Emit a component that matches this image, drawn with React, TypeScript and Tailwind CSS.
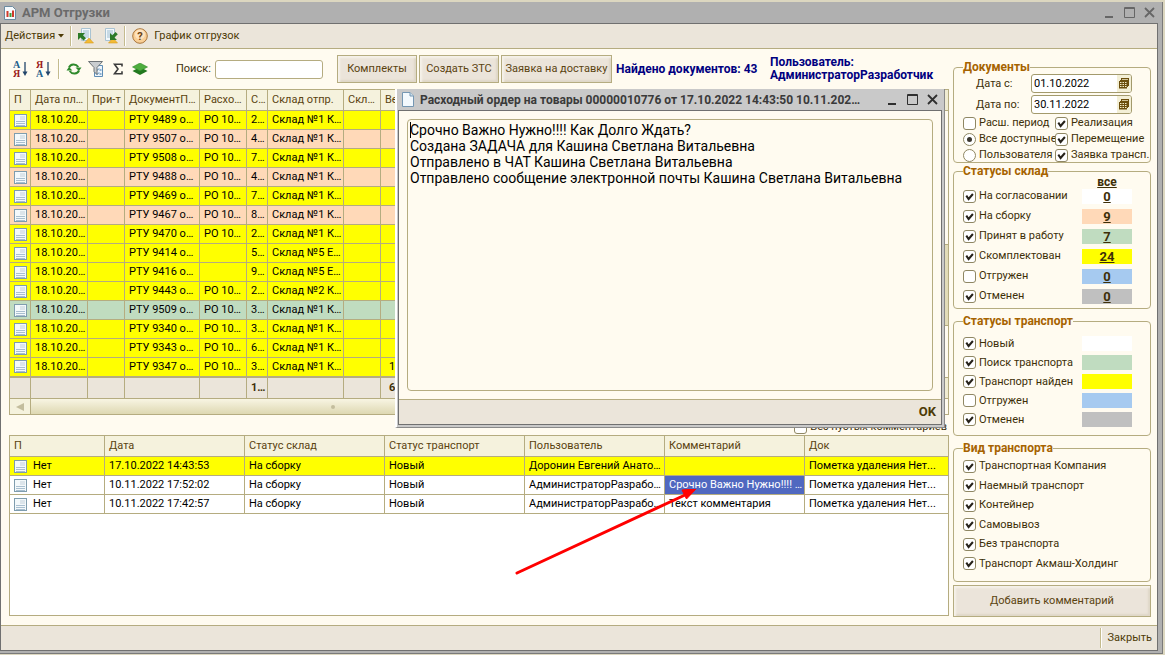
import type { ReactNode } from "react";
import { clsx } from "clsx";

const shipments = [
	{ doc: "РТУ 9489 о…", order: "РО 10…", count: "2…", store: "Склад №1 К…", color: "bg-[#ffff00]" },
	{ doc: "РТУ 9507 о…", order: "РО 10…", count: "4…", store: "Склад №1 К…", color: "bg-[#ffd9b8]" },
	{ doc: "РТУ 9508 о…", order: "РО 10…", count: "7…", store: "Склад №1 К…", color: "bg-[#ffff00]" },
	{ doc: "РТУ 9488 о…", order: "РО 10…", count: "4…", store: "Склад №1 К…", color: "bg-[#ffd9b8]" },
	{ doc: "РТУ 9469 о…", order: "РО 10…", count: "7…", store: "Склад №1 К…", color: "bg-[#ffff00]" },
	{ doc: "РТУ 9467 о…", order: "РО 10…", count: "8…", store: "Склад №1 К…", color: "bg-[#ffd9b8]" },
	{ doc: "РТУ 9470 о…", order: "РО 10…", count: "2…", store: "Склад №1 К…", color: "bg-[#ffff00]" },
	{ doc: "РТУ 9414 о…", order: "", count: "5…", store: "Склад №5 Е…", color: "bg-[#ffff00]" },
	{ doc: "РТУ 9416 о…", order: "", count: "9…", store: "Склад №5 Е…", color: "bg-[#ffff00]" },
	{ doc: "РТУ 9443 о…", order: "РО 10…", count: "2…", store: "Склад №2 К…", color: "bg-[#ffff00]" },
	{ doc: "РТУ 9509 о…", order: "РО 10…", count: "3…", store: "Склад №1 К…", color: "bg-[#c0dcc0]" },
	{ doc: "РТУ 9340 о…", order: "РО 10…", count: "3…", store: "Склад №1 К…", color: "bg-[#ffff00]" },
	{ doc: "РТУ 9343 о…", order: "РО 10…", count: "6…", store: "Склад №1 К…", color: "bg-[#ffff00]" },
	{ doc: "РТУ 9347 о…", order: "РО 10…", count: "3…", store: "Склад №1 К…", weight: "1", color: "bg-[#ffff00]" },
];

const comments = [
	{ date: "17.10.2022 14:43:53", user: "Доронин Евгений Анато…", text: "", color: "bg-[#ffff00]" },
	{ date: "10.11.2022 17:52:02", user: "АдминистраторРазрабо…", text: "Срочно Важно Нужно!!!! …", color: "bg-white", active: true },
	{ date: "10.11.2022 17:42:57", user: "АдминистраторРазрабо…", text: "Текст комментария", color: "bg-white" },
];

const storeStatuses = [
	{ label: "На согласовании", count: 0, color: "bg-white", checked: true },
	{ label: "На сборку", count: 9, color: "bg-[#ffd9b8]", checked: true },
	{ label: "Принят в работу", count: 7, color: "bg-[#c0dcc0]", checked: true },
	{ label: "Скомплектован", count: 24, color: "bg-[#ffff00]", checked: true },
	{ label: "Отгружен", count: 0, color: "bg-[#a6caf0]", checked: false },
	{ label: "Отменен", count: 0, color: "bg-[#c0c0c0]", checked: true },
];

const transportStatuses = [
	{ label: "Новый", color: "bg-white", checked: true },
	{ label: "Поиск транспорта", color: "bg-[#c0dcc0]", checked: true },
	{ label: "Транспорт найден", color: "bg-[#ffff00]", checked: true },
	{ label: "Отгружен", color: "bg-[#a6caf0]", checked: false },
	{ label: "Отменен", color: "bg-[#c0c0c0]", checked: true },
];

const transportKinds = [
	"Транспортная Компания",
	"Наемный транспорт",
	"Контейнер",
	"Самовывоз",
	"Без транспорта",
	"Транспорт Акмаш-Холдинг",
];

const message = `Срочно Важно Нужно!!!! Как Долго Ждать?
Создана ЗАДАЧА для Кашина Светлана Витальевна
Отправлено в ЧАТ Кашина Светлана Витальевна
Отправлено сообщение электронной почты Кашина Светлана Витальевна`;

const Check = ({ label, checked }: { label: string; checked?: boolean }) => (
	<label className="flex items-center gap-[3px] whitespace-nowrap">
		<span className="grid shrink-0">
			<input
				type="checkbox"
				defaultChecked={checked}
				className="peer h-[13px] w-[13px] appearance-none rounded-[3px] border border-[#8f8763] bg-white [grid-area:1/1]"
			/>
			<svg
				viewBox="0 0 13 13"
				className="pointer-events-none invisible h-[13px] w-[13px] [grid-area:1/1] peer-checked:visible"
			>
				<path d="M3.3 5.6 L5.6 9 L9.9 4" fill="none" stroke="#26221a" strokeWidth="2" />
			</svg>
		</span>
		{label}
	</label>
);

const Radio = ({ label, checked }: { label: string; checked?: boolean }) => (
	<label className="flex items-center gap-[3px] whitespace-nowrap">
		<span className="grid shrink-0 place-items-center">
			<input
				type="radio"
				name="scope"
				defaultChecked={checked}
				className="peer h-[13px] w-[13px] appearance-none rounded-full border border-[#8f8763] bg-white [grid-area:1/1]"
			/>
			<span className="pointer-events-none invisible h-[5px] w-[5px] rounded-full bg-[#3a362e] [grid-area:1/1] peer-checked:visible" />
		</span>
		{label}
	</label>
);

const Group = ({ title, className, children }: { title: string; className?: string; children: ReactNode }) => (
	<fieldset className={clsx("min-w-0 rounded-[4px] border border-[#b5ac80] pl-[9px]", className)}>
		<legend className="text-[12px] leading-[14px] font-bold text-[#a66300]">{title}</legend>
		{children}
	</fieldset>
);

const DateField = ({ id, label, value }: { id: string; label: string; value: string }) => (
	<div className="flex items-center pl-[13px]">
		<label htmlFor={id} className="w-[55px]">
			{label}
		</label>
		<div className="flex h-[19px] w-[101px] overflow-hidden rounded-[3px] border border-[#a39a6c] bg-white">
			<input id={id} defaultValue={value} className="w-[85px] min-w-0 pl-0.5 text-black outline-none" />
			<button aria-label="Календарь" className="flex flex-1 items-center justify-center bg-[#f3efd6]">
				<svg viewBox="0 0 12 12" className="h-3 w-3">
					<path d="M3 0h8v8h-1v1H9v1.500H1V3h1V2h1z" fill="#6b4e0c" />
					<path
						d="M2 4h1.500v1H2zM4.500 4H6v1H4.500zM7 4h1.500v1H7zM2 6h1.500v1H2zM4.500 6H6v1H4.500zM7 6h1.500v1H7zM2 8h1.500v1H2zM4.500 8H6v1H4.500zM7 8h1.500v1H7zM4 1.200h6v.8H4z"
						fill="#f3ecc8"
					/>
				</svg>
			</button>
		</div>
	</div>
);

const PageIcon = () => (
	<svg viewBox="0 0 13 13" className="h-[13px] w-[13px] shrink-0">
		<rect x=".5" y=".5" width="12" height="12" fill="#f4f9fb" stroke="#7f9dae" />
		<path d="M6 3h5M6 5h5" stroke="#c3d0da" />
		<path d="M2 7.500h9M2 9.500h9M2 11.500h9" stroke="#a9bfd0" />
	</svg>
);

const SortIcon = ({ top, bottom, topColor, bottomColor }: { top: string; bottom: string; topColor: string; bottomColor: string }) => (
	<svg viewBox="0 0 16 18" className="h-[18px] w-4">
		<text x="0" y="8" fontFamily="Liberation Serif, serif" fontWeight="bold" fontSize="10" fill={topColor}>
			{top}
		</text>
		<text x="0" y="17" fontFamily="Liberation Serif, serif" fontWeight="bold" fontSize="10" fill={bottomColor}>
			{bottom}
		</text>
		<path d="M12 2v12" stroke="#23456b" strokeWidth="1.300" />
		<path d="M9.500 11.500h5L12 16z" fill="#23456b" />
	</svg>
);

const ExchangeIcon = ({ incoming }: { incoming?: boolean }) => (
	<svg viewBox="0 0 16 16" className="h-4 w-4">
		<path d="M3.500 .5h9v12h-9z" fill="#f2f8fb" stroke="#a9c3d2" />
		<path d="M5 3h6M5 5h6M5 7h6M5 9h6" stroke="#9dbccf" />
		<path d="M6.500 15l4.500-5 4.500 5z" fill="#f3bb35" stroke="#d79a20" strokeWidth=".6" />
		{incoming ? (
			<path d="M8 12V5l2.300 2.300L13.500 4l2.300 2.200-3.300 3.300L15 12z" fill="#2c7a28" />
		) : (
			<path d="M0 5h7L5 7.200l3 3-2.500 2.300-3-3L0 12z" fill="#2c7a28" />
		)}
	</svg>
);

const Separator = () => <span className="h-5 w-0.5 border-l border-[#c4bb8e] bg-white" />;

const WindowButtons = ({ className }: { className?: string }) => (
	<div className={clsx("flex items-center gap-[9px]", className)}>
		<button aria-label="Свернуть">
			<svg viewBox="0 0 11 11" className="h-[11px] w-[11px]">
				<path d="M1 10h8" stroke="currentColor" strokeWidth="2" />
			</svg>
		</button>
		<button aria-label="Развернуть">
			<svg viewBox="0 0 11 11" className="h-[11px] w-[11px]">
				<path d="M.5 .5h10v10h-10zM.5 1.500h10" fill="none" stroke="currentColor" />
			</svg>
		</button>
		<button aria-label="Закрыть окно">
			<svg viewBox="0 0 11 11" className="h-[11px] w-[11px]">
				<path d="M1 1l9 9M10 1l-9 9" stroke="currentColor" strokeWidth="1.800" />
			</svg>
		</button>
	</div>
);

const CommandButton = ({ className, children }: { className: string; children: ReactNode }) => (
	<button
		className={clsx(
			"shrink-0 border border-[#b5ac80] bg-[#ebe4da] whitespace-nowrap text-[#5a4310] shadow-[inset_2px_2px_2px_#f6f2ea,inset_-2px_-2px_2px_#dfd7c8]",
			className,
		)}
	>
		{children}
	</button>
);

const th = "h-[21px] border border-[#b5ac80] bg-[#f5f2dd] px-1 text-left font-normal text-[#5a4310]";
const td = "h-[19px] border border-[#b5ac80] px-1";

const ShipmentsTable = () => (
	<div className="flex h-[326px] flex-col border border-[#b5ac80] bg-white">
		<div className="flex min-h-0 flex-1">
			<div className="-mt-px -ml-px min-w-0 flex-1 overflow-hidden">
				<table className="w-full table-fixed border-collapse whitespace-nowrap">
					<colgroup>
						<col className="w-[21px]" />
						<col className="w-[57px]" />
						<col className="w-[37px]" />
						<col className="w-[75px]" />
						<col className="w-[47px]" />
						<col className="w-[21px]" />
						<col className="w-[76px]" />
						<col className="w-[37px]" />
						<col />
					</colgroup>
					<thead>
						<tr>
							{["П", "Дата пл…", "При-т", "ДокументП…", "Расхо…", "С…", "Склад отпр.", "Скл…", "Ве…"].map((name) => (
								<th key={name} className={th}>
									{name}
								</th>
							))}
						</tr>
					</thead>
					<tbody className="text-black">
						{shipments.map((row) => (
							<tr key={row.doc} className={row.color}>
								<td className={td}>
									<PageIcon />
								</td>
								<td className={td}>18.10.20…</td>
								<td className={td} />
								<td className={td}>{row.doc}</td>
								<td className={td}>{row.order}</td>
								<td className={td}>{row.count}</td>
								<td className={td}>{row.store}</td>
								<td className={td} />
								<td className={clsx(td, "pl-2")}>{row.weight}</td>
							</tr>
						))}
					</tbody>
					<tfoot className="bg-[#ebe5da] font-bold">
						<tr>
							<td className={clsx(td, "h-[22px] border-t-2")} />
							<td className={clsx(td, "border-t-2")} />
							<td className={clsx(td, "border-t-2")} />
							<td className={clsx(td, "border-t-2")} />
							<td className={clsx(td, "border-t-2")} />
							<td className={clsx(td, "border-t-2")}>1…</td>
							<td className={clsx(td, "border-t-2")} />
							<td className={clsx(td, "border-t-2")} />
							<td className={clsx(td, "border-t-2 pl-2")}>6</td>
						</tr>
					</tfoot>
				</table>
			</div>
			{/* Vertical scrollbar */}
			<div className="flex w-4 flex-col bg-[#fffbf0]">
				<div className="h-[21px] border-b border-[#b5ac80] bg-[#f0ecd2]" />
				<div className="flex-1" />
				<div className="h-[82px] border-y border-[#b5ac80] bg-[#e2dcb9]" />
				<div className="h-[51px]" />
				<div className="h-[22px] border-y border-[#b5ac80] bg-[#f0ecd2]" />
			</div>
		</div>
		{/* Horizontal scrollbar */}
		<div className="flex h-[15px] bg-[#f5f2dd]">
			<div className="flex w-[21px] items-center justify-center border-r border-[#b5ac80]">
				<svg viewBox="0 0 8 8" className="h-2 w-2">
					<path d="M8 0v8L0 4z" fill="#c3bd9d" />
				</svg>
			</div>
			<div className="flex flex-1 items-center bg-linear-to-b from-[#f8f5e3] to-[#ded8b2] pl-[300px]">
				<span className="h-1 w-1 rounded-full bg-[#c3bd9d]" />
			</div>
			<div className="w-4 bg-[#fffbf0]" />
		</div>
	</div>
);

const CommentsTable = () => (
	<div className="min-h-[181px] flex-1 border border-[#b5ac80] bg-white">
		<table className="-mt-px -ml-px w-[calc(100%+2px)] table-fixed border-collapse whitespace-nowrap">
			<colgroup>
				<col className="w-[95px]" />
				<col className="w-[140px]" />
				<col className="w-[140px]" />
				<col className="w-[140px]" />
				<col className="w-[140px]" />
				<col className="w-[140px]" />
				<col />
			</colgroup>
			<thead>
				<tr>
					{["П", "Дата", "Статус склад", "Статус транспорт", "Пользователь", "Комментарий", "Док"].map((name) => (
						<th key={name} className={clsx(th, name === "Комментарий" && "bg-[#d0cbb6]")}>
							{name}
						</th>
					))}
				</tr>
			</thead>
			<tbody className="text-black">
				{comments.map((row) => (
					<tr key={row.date} className={row.color}>
						<td className={td}>
							<div className="flex items-center gap-1.5">
								<PageIcon />
								Нет
							</div>
						</td>
						<td className={td}>{row.date}</td>
						<td className={td}>На сборку</td>
						<td className={td}>Новый</td>
						<td className={td}>{row.user}</td>
						<td className={clsx(td, row.active && "bg-[#5068c0] text-white")}>{row.text}</td>
						<td className={td}>Пометка удаления Нет...</td>
					</tr>
				))}
			</tbody>
		</table>
	</div>
);

const Toolbar = () => (
	<div className="flex h-10 items-center pl-1">
		<div className="flex items-center gap-1.5">
			<button aria-label="По возрастанию">
				<SortIcon top="А" bottom="Я" topColor="#1f5f8b" bottomColor="#9c1c1c" />
			</button>
			<button aria-label="По убыванию" className="ml-px">
				<SortIcon top="Я" bottom="А" topColor="#9c1c1c" bottomColor="#1f5f8b" />
			</button>
			<Separator />
			<button aria-label="Обновить">
				<svg viewBox="0 0 16 16" className="h-4 w-4">
					<path d="M3 6.500C4.500 3 9.500 2 12.300 6" fill="none" stroke="#2f8a2c" strokeWidth="2" />
					<path d="M13 9.500C11.500 13 6.500 14 3.700 10" fill="none" stroke="#2f8a2c" strokeWidth="2" />
					<path d="M9.500 6.500h6L13 10zM6.500 9.500h-6L3 6z" fill="#2f8a2c" />
				</svg>
			</button>
			<button aria-label="Отбор">
				<svg viewBox="0 0 16 16" className="h-4 w-4">
					<path d="M6.500 4.500h8v11h-8z" fill="#eef5fb" stroke="#5f8db5" />
					<path d="M8 8.500l1 1 2-2M8 12.500l1 1 2-2M11.500 9h2M11.500 13h2" fill="none" stroke="#2f6fa8" />
					<path d="M.5 .5h14l-5.500 6v7l-3-3v-4z" fill="#c9cdd0" stroke="#6e7478" />
				</svg>
			</button>
			<button aria-label="Итоги" className="ml-0.5">
				<svg viewBox="0 0 12 12" className="h-3 w-3">
					<path d="M10 3.500V1.200H2.500L6 6l-3.500 4.800H10V8.300" fill="none" stroke="#3c3c3c" strokeWidth="1.600" />
				</svg>
			</button>
			<button aria-label="Слои" className="ml-0.5">
				<svg viewBox="0 0 16 12" className="h-3 w-4">
					<path d="M8 4l7.500 4L8 12 .5 8z" fill="#23791f" />
					<path d="M8 0l7.500 4L8 8 .5 4z" fill="#4fae3e" stroke="#2f8a2c" strokeWidth=".6" />
				</svg>
			</button>
		</div>
		<label htmlFor="search" className="ml-7 w-[39px]">
			Поиск:
		</label>
		<input
			id="search"
			className="h-[19px] w-[108px] shrink-0 rounded-[3px] border border-[#b5ac80] bg-white px-1 outline-none"
		/>
		<div className="ml-3.5 flex gap-0.5">
			<CommandButton className="h-7 w-20">Комплекты</CommandButton>
			<CommandButton className="h-7 w-20">Создать ЗТС</CommandButton>
			<CommandButton className="h-7 w-[111px]">Заявка на доставку</CommandButton>
		</div>
		<div className="ml-1 w-[154px] text-[12px] font-bold whitespace-nowrap text-[#000080]">Найдено документов: 43</div>
		<div className="text-[12px] leading-[13px] font-bold whitespace-nowrap text-[#000080]">
			Пользователь:
			<br />
			АдминистраторРазработчик
		</div>
	</div>
);

const Filters = () => (
	<aside className="flex w-[198px] shrink-0 flex-col pt-[11px]">
		<Group title="Документы" className="h-[103px]">
			<div className="flex flex-col gap-0.5">
				<DateField id="date-from" label="Дата с:" value="01.10.2022" />
				<DateField id="date-to" label="Дата по:" value="30.11.2022" />
			</div>
			<div className="mt-px grid grid-cols-[92px_1fr] leading-4">
				<Check label="Расш. период" />
				<Check label="Реализация" checked />
				<Radio label="Все доступные" checked />
				<Check label="Перемещение" checked />
				<Radio label="Пользователя" />
				<Check label="Заявка трансп." checked />
			</div>
		</Group>
		<Group title="Статусы склад" className="mt-px h-[145px] pr-[18px]">
			<div className="flex h-2 items-center justify-end">
				<a href="#all" className="w-[50px] text-center text-[12px] leading-3 font-bold underline">
					все
				</a>
			</div>
			{storeStatuses.map((status) => (
				<div key={status.label} className="flex h-5 items-center justify-between">
					<Check label={status.label} checked={status.checked} />
					<a
						href="#status"
						className={clsx("h-[15px] w-[50px] text-center text-[13px] leading-[15px] font-bold underline", status.color)}
					>
						{status.count}
					</a>
				</div>
			))}
		</Group>
		<Group title="Статусы транспорт" className="mt-[5px] h-[122px] pt-1.5 pr-[18px]">
			{transportStatuses.map((status) => (
				<div key={status.label} className="flex h-[19px] items-center justify-between">
					<Check label={status.label} checked={status.checked} />
					<span className={clsx("h-[15px] w-[50px]", status.color)} />
				</div>
			))}
		</Group>
		<Group title="Вид транспорта" className="mt-[5px] h-[141px]">
			<div className="mt-1 flex h-[112px] flex-col justify-between">
				{transportKinds.map((kind) => (
					<Check key={kind} label={kind} checked />
				))}
			</div>
		</Group>
		<CommandButton className="mt-[3px] h-8">Добавить комментарий</CommandButton>
	</aside>
);

const OrderDialog = () => (
	<div
		role="dialog"
		aria-label="Расходный ордер на товары"
		className="absolute top-[89px] left-[395px] flex h-[339px] w-[550px] flex-col border-r border-b border-l-2 border-r-[#8a8a8a] border-b-[#8a8a8a] border-l-white bg-[#c9c9c9] pr-0.5 pb-0.5 pl-px"
	>
		<div className="flex h-[21px] shrink-0 items-center pr-1 pl-1">
			<svg viewBox="0 0 12 15" className="mr-1.5 h-[15px] w-3 shrink-0">
				<path d="M.5 .5h7.500l3.500 3.500v10.500H.5z" fill="#f3f9fd" stroke="#7597b3" />
				<path d="M8 .5v3.500h3.500" fill="#cfe2ef" stroke="#7597b3" />
			</svg>
			<h2 className="min-w-0 flex-1 text-[12px] font-bold whitespace-nowrap text-[#3a3a3a]">
				Расходный ордер на товары 00000010776 от 17.10.2022 14:43:50 10.11.202…
			</h2>
			<WindowButtons className="ml-2 text-[#2f2f2f]" />
		</div>
		<div className="flex min-h-0 flex-1 flex-col border border-[#707070] bg-[#fffbf0]">
			<div className="relative flex flex-1 px-2 py-2">
				<textarea
					aria-label="Комментарий"
					defaultValue={message}
					className="flex-1 resize-none rounded-[4px] border border-[#b5ac80] bg-[#fffbf0] px-0.5 py-0.5 text-[14px] leading-4 text-black outline-none"
				/>
				<span className="absolute top-[11px] left-[11px] h-4 w-px bg-black" />
			</div>
			<div className="flex h-[25px] items-center justify-end border-t border-[#b5ac80] bg-[#ebe5da] pr-[5px]">
				<button className="text-[13px] font-bold text-[#4d3a05]">OK</button>
			</div>
		</div>
	</div>
);

export default function App() {
	return (
		<div className="relative flex min-h-screen flex-col bg-[#dcd7c0] pt-0.5 pr-0.5 pb-px font-[Roboto,'Liberation_Sans',sans-serif] text-[11px] leading-[14px] text-[#3d2f08]">
			<div className="flex flex-1 flex-col border-r border-b border-[#7a7a7a] bg-[#b0b0b0] pr-1 pb-0.5">
				{/* Title bar */}
				<div className="flex h-[21px] items-center pr-[3px] pl-1">
					<svg viewBox="0 0 12 14" className="mr-1.5 h-3.5 w-3">
						<path d="M.5 .5h8l3 3v10h-11z" fill="#f7fbfd" stroke="#6b8ba0" />
						<path d="M2.500 5h2v6h-2z" fill="#d03a2a" />
						<path d="M5.500 7h2v4h-2z" fill="#3e9a3a" />
						<path d="M8 4.500h2V11H8z" fill="#d03a2a" />
					</svg>
					<h1 className="flex-1 text-[13px] font-bold text-[#6a6a6a]">АРМ Отгрузки</h1>
					<WindowButtons className="text-[#666666]" />
				</div>

				<div className="flex flex-1 flex-col border border-[#707070] bg-[#fffbf0]">
					{/* Menu bar */}
					<div className="flex h-[25px] items-center border-b border-[#b5ac80] bg-[#ebe5da] pl-1 text-[#4d3a05]">
						<button className="flex items-center gap-[3px]">
							Действия
							<svg viewBox="0 0 6 4" className="h-1 w-1.5">
								<path d="M0 0h6L3 3.500z" fill="#4d3a05" />
							</svg>
						</button>
						<div className="ml-1.5 flex items-center gap-1.5">
							<Separator />
							<button aria-label="Выгрузить">
								<ExchangeIcon />
							</button>
							<button aria-label="Загрузить" className="ml-0.5">
								<ExchangeIcon incoming />
							</button>
							<Separator />
							<button aria-label="Справка">
								<svg viewBox="0 0 16 16" className="h-4 w-4">
									<circle cx="8" cy="8" r="7.300" fill="#f9cf96" stroke="#a9753c" />
									<circle cx="8" cy="6.500" r="5" fill="#fde3bf" />
									<text x="8" y="12" textAnchor="middle" fontFamily="Roboto, sans-serif" fontWeight="bold" fontSize="11" fill="#6b4212">
										?
									</text>
								</svg>
							</button>
							<button>График отгрузок</button>
						</div>
					</div>

					<div className="flex flex-1 gap-1 pr-1.5 pl-2">
						<main className="flex min-w-0 flex-1 flex-col pb-[9px]">
							<Toolbar />
							<ShipmentsTable />
							<div className="flex h-5 items-center justify-end pt-1 pr-0.5">
								<Check label="Без пустых комментариев" />
							</div>
							<CommentsTable />
						</main>
						<Filters />
					</div>

					{/* Bottom bar */}
					<div className="flex h-[25px] items-center justify-end gap-1.5 border-t border-[#b5ac80] bg-[#ebe5da] pr-[5px] text-[#4d3a05]">
						<Separator />
						<button>Закрыть</button>
					</div>
				</div>
			</div>

			<OrderDialog />

			<svg viewBox="0 0 182 86" className="pointer-events-none absolute top-[489px] left-[515px] h-[86px] w-[182px]">
				<path d="M2 84L170 6" stroke="#ff0000" strokeWidth="3" strokeLinecap="round" />
				<path d="M181 0l-9.500 10-4.500-9z" fill="#ff0000" stroke="#ff0000" />
			</svg>
		</div>
	);
}
